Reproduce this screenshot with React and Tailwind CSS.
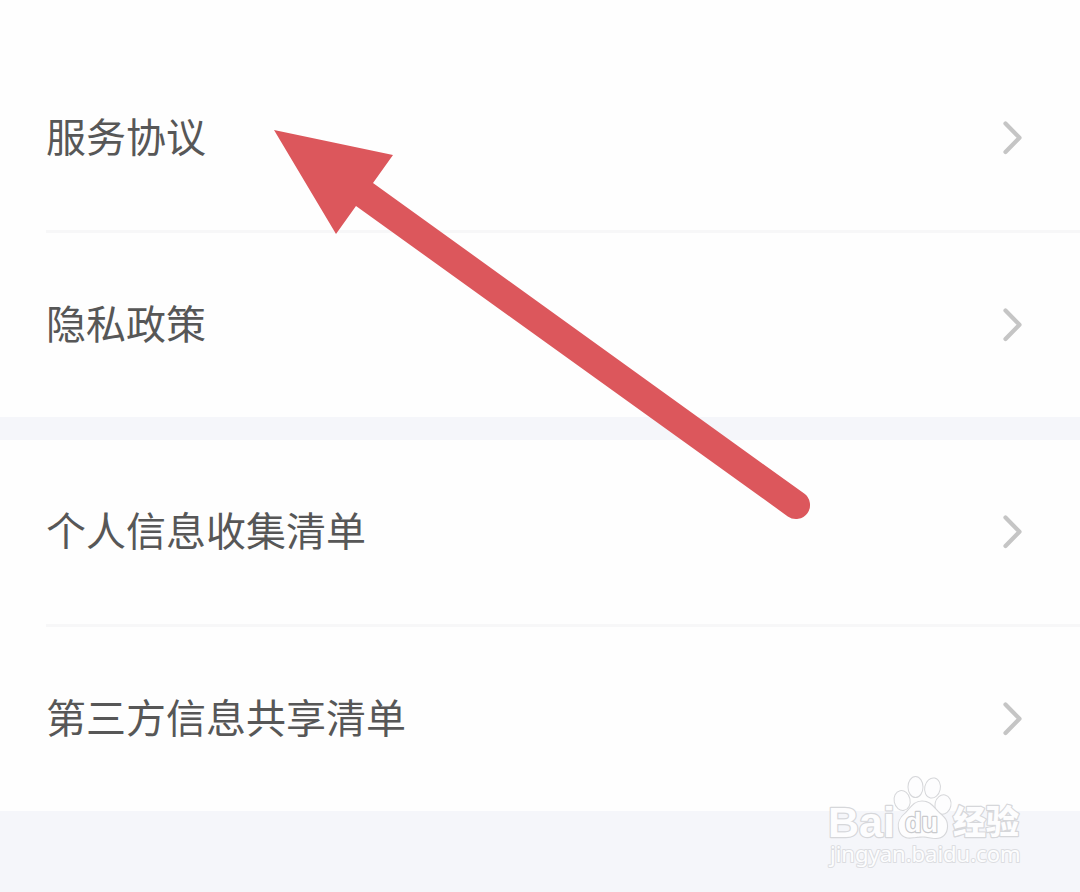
const groups = [
  ["服务协议", "隐私政策"],
  ["个人信息收集清单", "第三方信息共享清单"],
]

function Chevron() {
  return (
    <svg className="h-9 w-6 shrink-0" viewBox="0 0 24 36" fill="none" aria-hidden="true">
      <path d="M5.5 3.5L19.5 17.7L5.5 32" stroke="#c5c5c5" strokeWidth="4.2" strokeLinecap="round" strokeLinejoin="round" />
    </svg>
  )
}

function Row({ label }) {
  return (
    <li className="ml-[46px] border-[#f7f7f8] not-last:border-b-3">
      <a href="#" className="flex h-[184px] items-center justify-between pr-14">
        <span className="pb-1.5 text-[40px] leading-[48px] text-[#575757]">{label}</span>
        <Chevron />
      </a>
    </li>
  )
}

function Arrow() {
  return (
    <svg
      className="pointer-events-none absolute top-[120px] left-[264px] h-[410px] w-[556px]"
      viewBox="264 120 556 410"
      aria-hidden="true"
    >
      <path
        d="M274 130L393 155L373 183L804.2 493.6A14 14 0 0 1 787.8 516.4L356 206L336 234Z"
        fill="#dc575c"
      />
    </svg>
  )
}

function Watermark() {
  return (
    <svg
      className="h-[100px] w-[210px]"
      viewBox="820 770 210 100"
      fill="#fdfdfe"
      stroke="#d6d7da"
      strokeWidth="2.4"
      strokeLinejoin="round"
      paintOrder="stroke"
      role="img"
      aria-label="Baidu 经验"
    >
      {/* Paw */}
      <ellipse cx="902" cy="800.5" rx="7.5" ry="9.5" strokeWidth="2" transform="rotate(-12 902 800)" />
      <ellipse cx="915.5" cy="787" rx="7" ry="10" strokeWidth="2" />
      <ellipse cx="932.5" cy="788" rx="7.3" ry="9.7" strokeWidth="2" transform="rotate(12 932.5 788)" />
      <ellipse cx="943" cy="804.5" rx="7.5" ry="9.3" strokeWidth="2" transform="rotate(12 943 804.5)" />
      <path
        d="M922 801.5C914 801.5 911 808 906 813C900 818 898 822 899 828C900 835 905 838 911 837.5C917 837 918 836.5 923 836.5C928 836.5 930 838 936 838C942 838 947 834 947 826C947 819 943 817 938 812C933 807 930 801.5 922 801.5Z"
        strokeWidth="2.2"
      />
      <g className="font-['Liberation_Sans',sans-serif] font-bold">
        <text x="828" y="837" fontSize="43">Bai</text>
        <text x="905" y="832" fontSize="27" stroke="#c9cacd">du</text>
      </g>
      <text x="953" y="834" fontSize="33" className="font-['Noto_Sans_CJK_SC',sans-serif] font-black">经验</text>
      <text x="830" y="862" fontSize="22" stroke="#dcdde1" strokeWidth="2" className="font-['Noto_Sans',sans-serif]">
        jingyan.baidu.com
      </text>
    </svg>
  )
}

function App() {
  return (
    <div className="relative flex min-h-screen flex-col bg-[#f5f6fa] font-['Noto_Sans_CJK_SC',sans-serif]">
      <main className="flex flex-col gap-[23px]">
        {groups.map((items, i) => (
          <ul key={i} className="bg-[#fefefe] first:pt-[46px]">
            {items.map((label) => (
              <Row key={label} label={label} />
            ))}
          </ul>
        ))}
      </main>

      <Arrow />

      <div className="absolute right-[50px] bottom-[22px]">
        <Watermark />
      </div>
    </div>
  )
}

export default App
